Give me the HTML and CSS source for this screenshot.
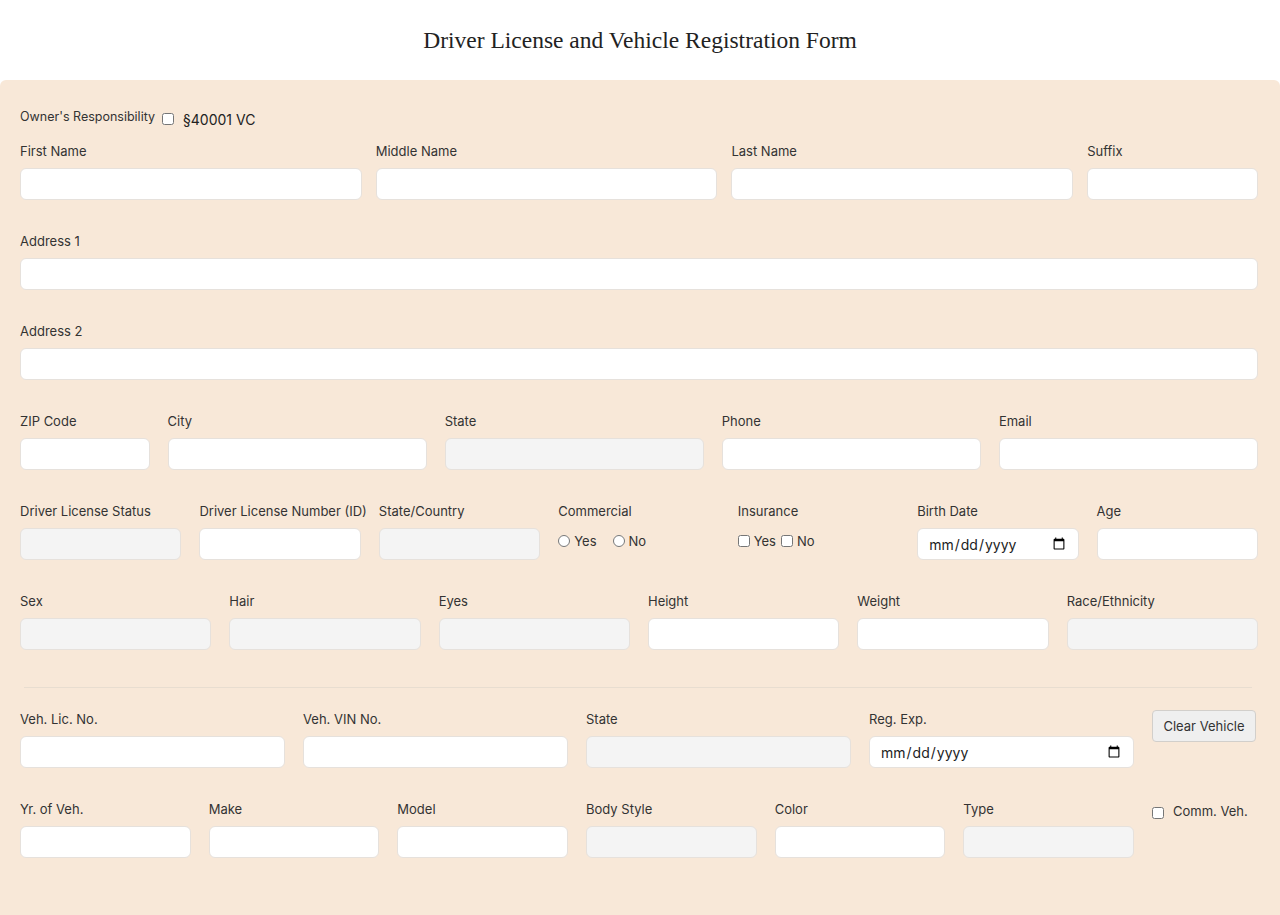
FILE: index.html
```html
<!DOCTYPE html>
<html lang="en">

<head>
  <meta charset="UTF-8">
  <meta name="viewport" content="width=device-width, initial-scale=1.0">
  <title>Driver License and Vehicle Registration Form</title>
  <link rel="stylesheet" href="styles.css">
</head>

<body>
  <header>
    <h1>Driver License and Vehicle Registration Form</h1>
  </header>

  <main>
    <form class="panel">
      <div class="owner">
        <label for="owner" class="owner-label">Owner's Responsibility</label>
        <input type="checkbox" id="owner" name="owner">
        <span class="owner-code">§40001 VC</span>
      </div>

      <div class="row row-name">
        <div class="field"><label for="first">First Name</label><input id="first" type="text"></div>
        <div class="field"><label for="middle">Middle Name</label><input id="middle" type="text"></div>
        <div class="field"><label for="last">Last Name</label><input id="last" type="text"></div>
        <div class="field"><label for="suffix">Suffix</label><input id="suffix" type="text"></div>
      </div>

      <div class="row">
        <div class="field"><label for="address1">Address 1</label><input id="address1" type="text"></div>
      </div>

      <div class="row">
        <div class="field"><label for="address2">Address 2</label><input id="address2" type="text"></div>
      </div>

      <div class="row row-contact">
        <div class="field"><label for="zip">ZIP Code</label><input id="zip" type="text"></div>
        <div class="field"><label for="city">City</label><input id="city" type="text"></div>
        <div class="field"><label for="state">State</label><input id="state" type="text" class="locked" readonly></div>
        <div class="field"><label for="phone">Phone</label><input id="phone" type="tel"></div>
        <div class="field"><label for="email">Email</label><input id="email" type="email"></div>
      </div>

      <div class="row row-license">
        <div class="field"><label for="dl-status">Driver License Status</label><input id="dl-status" type="text" class="locked" readonly></div>
        <div class="field"><label for="dl-number">Driver License Number (ID)</label><input id="dl-number" type="text"></div>
        <div class="field"><label for="dl-country">State/Country</label><input id="dl-country" type="text" class="locked" readonly></div>
        <div class="field">
          <span class="label">Commercial</span>
          <div class="choices">
            <label class="choice"><input type="radio" name="commercial" value="yes">Yes</label>
            <label class="choice"><input type="radio" name="commercial" value="no">No</label>
          </div>
        </div>
        <div class="field">
          <span class="label">Insurance</span>
          <div class="choices choices-tight">
            <label class="choice"><input type="checkbox" name="insurance-yes">Yes</label>
            <label class="choice"><input type="checkbox" name="insurance-no">No</label>
          </div>
        </div>
        <div class="field"><label for="birth">Birth Date</label><input id="birth" type="date"></div>
        <div class="field"><label for="age">Age</label><input id="age" type="text"></div>
      </div>

      <div class="row row-person">
        <div class="field"><label for="sex">Sex</label><input id="sex" type="text" class="locked" readonly></div>
        <div class="field"><label for="hair">Hair</label><input id="hair" type="text" class="locked" readonly></div>
        <div class="field"><label for="eyes">Eyes</label><input id="eyes" type="text" class="locked" readonly></div>
        <div class="field"><label for="height">Height</label><input id="height" type="text"></div>
        <div class="field"><label for="weight">Weight</label><input id="weight" type="text"></div>
        <div class="field"><label for="race">Race/Ethnicity</label><input id="race" type="text" class="locked" readonly></div>
      </div>

      <hr>

      <div class="row row-vehicle">
        <div class="field"><label for="veh-lic">Veh. Lic. No.</label><input id="veh-lic" type="text"></div>
        <div class="field"><label for="veh-vin">Veh. VIN No.</label><input id="veh-vin" type="text"></div>
        <div class="field"><label for="veh-state">State</label><input id="veh-state" type="text" class="locked" readonly></div>
        <div class="field"><label for="reg-exp">Reg. Exp.</label><input id="reg-exp" type="date"></div>
        <button type="reset" class="clear">Clear Vehicle</button>
      </div>

      <div class="row row-details">
        <div class="field"><label for="veh-year">Yr. of Veh.</label><input id="veh-year" type="text"></div>
        <div class="field"><label for="make">Make</label><input id="make" type="text"></div>
        <div class="field"><label for="model">Model</label><input id="model" type="text"></div>
        <div class="field"><label for="body">Body Style</label><input id="body" type="text" class="locked" readonly></div>
        <div class="field"><label for="color">Color</label><input id="color" type="text"></div>
        <div class="field"><label for="type">Type</label><input id="type" type="text" class="locked" readonly></div>
        <label class="comm"><input type="checkbox" name="comm-veh">Comm. Veh.</label>
      </div>
    </form>
  </main>
</body>

</html>
```

FILE: styles.css
```css
body {
  margin: 0;
  font-family: Inter, "Liberation Sans", sans-serif;
  background: #fff;
  color: #333;
}

header {
  height: 80px;
  display: flex;
  align-items: center;
  justify-content: center;
}

h1 {
  margin: 0;
  font-family: "Liberation Serif", serif;
  font-weight: 400;
  font-size: 23.5px;
  color: #222;
}

.panel {
  min-height: 835px;
  box-sizing: border-box;
  padding: 29px 22px 40px 20px;
  background: #f8e8d8;
  border-radius: 6px 6px 0 0;
}

.owner {
  display: flex;
  align-items: center;
  height: 20px;
  margin-bottom: 14px;
}

.owner-label {
  font-size: 12.5px;
  margin-top: -6px;
  margin-right: 7px;
}

.owner input {
  margin: 0 9px 0 0;
  width: 12px;
  height: 12px;
}

.owner-code {
  font-size: 14px;
  color: #222;
}

.row {
  display: grid;
  column-gap: 18px;
  margin-bottom: 33px;
}

.row-name {
  grid-template-columns: 2fr 2fr 2fr 1fr;
  column-gap: 14px;
}

.row-contact {
  grid-template-columns: 1fr 2fr 2fr 2fr 2fr;
}

.row-license {
  grid-template-columns: repeat(7, 1fr);
}

.row-person {
  grid-template-columns: repeat(6, 1fr);
}

.row-vehicle {
  grid-template-columns: repeat(4, 1fr) 106px;
}

.row-details {
  grid-template-columns: repeat(6, 1fr) 106px;
}

.field {
  display: flex;
  flex-direction: column;
  min-width: 0;
}

.field > label,
.label {
  font-size: 13px;
  line-height: 17px;
  margin-bottom: 8px;
  white-space: nowrap;
}

.field > input {
  box-sizing: border-box;
  width: 100%;
  height: 32px;
  margin: 0;
  padding: 4px 10px;
  font: 14px Inter, "Liberation Sans", sans-serif;
  color: #222;
  background: #fff;
  border: 1px solid #e6e1dc;
  border-radius: 6px;
}

.field > input.locked {
  background: #f4f4f4;
}

.choices {
  display: flex;
  gap: 16px;
  font-size: 13px;
  height: 26px;
  align-items: center;
}

.choices-tight {
  gap: 5px;
}

.choice {
  display: flex;
  align-items: center;
  gap: 4px;
}

.choice input {
  margin: 0;
  width: 12px;
  height: 12px;
}

/* the row above keeps its 33px bottom margin, so this one has to be larger */
hr {
  margin: 37px 6px 23px 4px;
  border: 0;
  border-top: 1px solid #e8ddd0;
}

.clear {
  align-self: start;
  width: 104px;
  height: 32px;
  margin-top: -1px;
  padding: 0;
  font: 13px Inter, "Liberation Sans", sans-serif;
  color: #333;
  background: #efefef;
  border: 1px solid #d2cfcb;
  border-radius: 4px;
  white-space: nowrap;
  cursor: pointer;
}

.comm {
  align-self: start;
  display: flex;
  align-items: center;
  gap: 9px;
  font-size: 13px;
  padding-top: 2px;
  white-space: nowrap;
}

.comm input {
  margin: 3px 0 0;
  width: 12px;
  height: 12px;
}
```
